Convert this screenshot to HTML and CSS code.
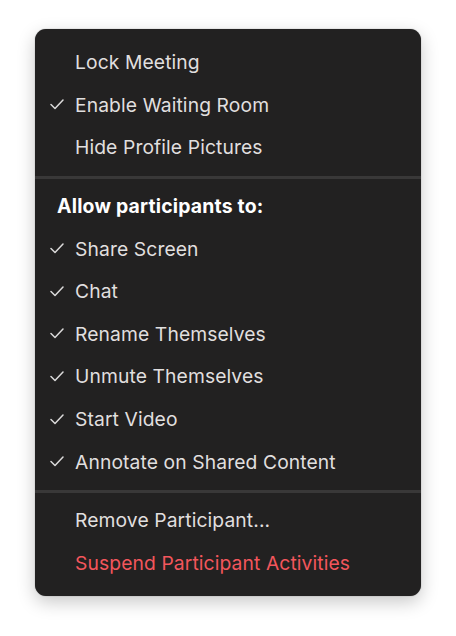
FILE: index.html
```html
<!DOCTYPE html>
<html lang="en">
<head>
    <meta charset="UTF-8">
    <meta name="viewport" content="width=device-width, initial-scale=1.0">
    <title>Security Menu</title>
    <link rel="stylesheet" href="styles.css">
</head>
<body>

<div class="menu">
    <div class="item"><span class="check"></span>Lock Meeting</div>
    <div class="item"><span class="check"><svg viewBox="0 0 14 11"><polyline points="1,5.5 5,9.5 13,1"/></svg></span>Enable Waiting Room</div>
    <div class="item"><span class="check"></span>Hide Profile Pictures</div>

    <div class="divider"></div>

    <div class="heading">Allow participants to:</div>
    <div class="item"><span class="check"><svg viewBox="0 0 14 11"><polyline points="1,5.5 5,9.5 13,1"/></svg></span>Share Screen</div>
    <div class="item"><span class="check"><svg viewBox="0 0 14 11"><polyline points="1,5.5 5,9.5 13,1"/></svg></span>Chat</div>
    <div class="item"><span class="check"><svg viewBox="0 0 14 11"><polyline points="1,5.5 5,9.5 13,1"/></svg></span>Rename Themselves</div>
    <div class="item"><span class="check"><svg viewBox="0 0 14 11"><polyline points="1,5.5 5,9.5 13,1"/></svg></span>Unmute Themselves</div>
    <div class="item"><span class="check"><svg viewBox="0 0 14 11"><polyline points="1,5.5 5,9.5 13,1"/></svg></span>Start Video</div>
    <div class="item"><span class="check"><svg viewBox="0 0 14 11"><polyline points="1,5.5 5,9.5 13,1"/></svg></span>Annotate on Shared Content</div>

    <div class="divider"></div>

    <div class="item"><span class="check"></span>Remove Participant...</div>
    <div class="item danger"><span class="check"></span>Suspend Participant Activities</div>
</div>

</body>
</html>
```

FILE: styles.css
```css
body {
    margin: 0;
    padding: 29px 0;
    background: #ffffff;
    font-family: Inter, "Noto Sans", sans-serif;
}
.menu {
    width: 386px;
    margin: 0 auto;
    padding: 12px 0;
    background: #222121;
    border-radius: 11px;
    box-shadow: 0 0 1px rgba(0, 0, 0, 0.5), 0 6px 18px rgba(0, 0, 0, 0.22);
}
.item {
    display: flex;
    align-items: center;
    height: 42.6px;
    padding-left: 15px;
    font-size: 19.3px;
    letter-spacing: 0.1px;
    color: #e0dfdf;
}
.check {
    display: flex;
    align-items: center;
    width: 25px;
    height: 12px;
}
.check svg {
    width: 14px;
    height: 11px;
    fill: none;
    stroke: #dcdbdb;
    stroke-width: 1.5;
    stroke-linecap: round;
    stroke-linejoin: round;
}
.danger {
    color: #f3565c;
}
.heading {
    height: 42.6px;
    line-height: 42.6px;
    padding-left: 22px;
    font-size: 19.4px;
    font-weight: 700;
    letter-spacing: 0.2px;
    color: #ffffff;
}
.divider {
    height: 3px;
    margin: 7px 0 6px;
    background: #393838;
}
```
